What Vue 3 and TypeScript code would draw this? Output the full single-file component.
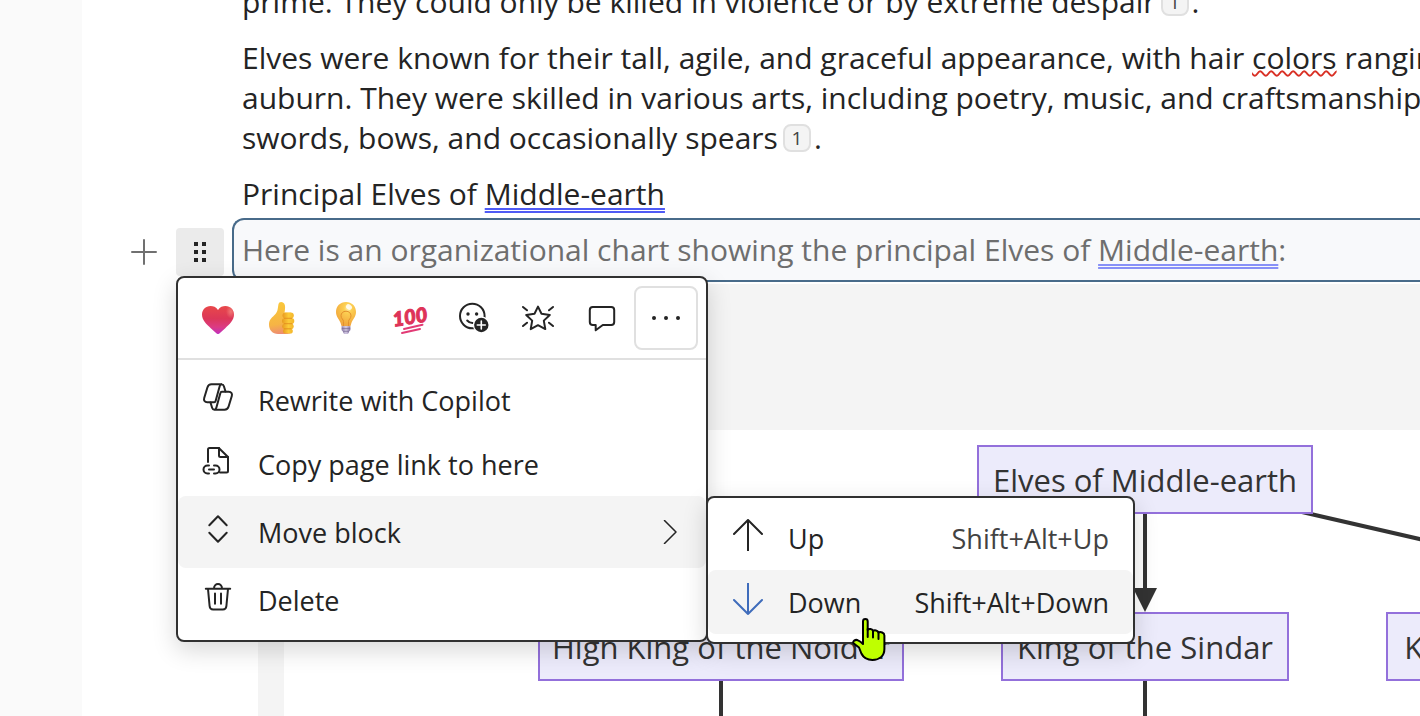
<script setup lang="ts">
import { ref } from 'vue'

interface ChartNode {
  id: string
  label: string
}

const nodes: ChartNode[] = [
  { id: 'root', label: 'Elves of Middle-earth' },
  { id: 'noldor', label: 'High King of the Noldor' },
  { id: 'sindar', label: 'King of the Sindar' },
  { id: 'kings', label: 'King of the Vanyar' },
]

const menuOpen = ref(true)
</script>

<template>
  <div class="app">
    <aside class="rail"></aside>
    <main class="doc">
      <p class="text">prime. They could only be killed in violence or by extreme despair<a class="cite" href="#ref-1">1</a>.</p>
      <p class="text">
        Elves were known for their tall, agile, and graceful appearance, with hair <span class="misspelt">colors</span> ranging from<br />
        auburn. They were skilled in various arts, including poetry, music, and craftsmanship.<br />
        swords, bows, and occasionally spears<a class="cite" href="#ref-1">1</a>.
      </p>
      <p class="text heading">Principal Elves of <span class="grammar">Middle-earth</span></p>

      <div class="block-row">
        <button class="add" type="button" aria-label="Add block">
          <svg width="26" height="26" viewBox="0 0 26 26"><path d="M13 1v24M1 13h24" /></svg>
        </button>
        <div class="handle-wrap">
          <button class="handle" type="button" aria-label="Block options" @click="menuOpen = !menuOpen">
            <svg width="16" height="24" viewBox="0 0 16 24">
              <path d="M2 2h4v4H2zM10 2h4v4h-4zM2 10h4v4H2zM10 10h4v4h-4zM2 18h4v4H2zM10 18h4v4h-4z" />
            </svg>
          </button>

          <div v-if="menuOpen" class="menu" role="menu">
            <div class="toolbar">
              <button class="tool" type="button" aria-label="Heart">
                <svg width="32" height="32" viewBox="0 0 32 32">
                  <defs>
                    <linearGradient id="heart" x1="0" y1="0" x2="0" y2="1">
                      <stop offset="0" stop-color="#e8484a" />
                      <stop offset=".45" stop-color="#dc3758" />
                      <stop offset=".75" stop-color="#dc3b83" />
                      <stop offset="1" stop-color="#c030c0" />
                    </linearGradient>
                    <radialGradient id="heartglow" cx=".8" cy=".25" r=".3">
                      <stop offset="0" stop-color="#f58a82" stop-opacity=".75" />
                      <stop offset="1" stop-color="#f58a82" stop-opacity="0" />
                    </radialGradient>
                  </defs>
                  <path fill="url(#heart)" d="M16 8C14 4.800 11.300 4 8.600 4 3.500 4 0 7.800 0 12.600c0 5.800 4.500 9.800 9 13.800 2 1.700 3.700 3.500 5.600 5.200.8.600 2 .6 2.800 0 1.900-1.700 3.600-3.500 5.600-5.200 4.500-4 9-8 9-13.800C32 7.800 28.500 4 23.400 4 20.700 4 18 4.800 16 8z" />
                  <path fill="url(#heartglow)" d="M16 8C18 4.800 20.700 4 23.400 4 28.500 4 32 7.800 32 12.600c0 5.800-4.500 9.800-9 13.800L16 20z" />
                </svg>
              </button>
              <button class="tool" type="button" aria-label="Thumbs up">
                <svg width="32" height="32" viewBox="0 0 32 32">
                  <defs>
                    <linearGradient id="thumb" x1=".3" y1="0" x2=".4" y2="1">
                      <stop offset="0" stop-color="#fac83a" />
                      <stop offset=".7" stop-color="#f6b445" />
                      <stop offset="1" stop-color="#ee8d72" />
                    </linearGradient>
                    <linearGradient id="finger" x1="0" y1="0" x2="1" y2="0">
                      <stop offset="0" stop-color="#e89a20" />
                      <stop offset=".55" stop-color="#fccb38" />
                      <stop offset="1" stop-color="#f3b52c" />
                    </linearGradient>
                  </defs>
                  <path fill="url(#thumb)" d="M15.300 0c2.500.1 3.800 2 3.800 5 0 2-.3 3.800-.6 5.800H25V31c-1.500.8-3 1-5 1h-8c-5.500 0-9-4-9-9.500 0-4.500 2.500-6.500 5-9 2.300-2.200 3.500-4 3.800-7L12.400 2.600C12.700.8 13.700 0 15.300 0z" />
                  <g fill="url(#finger)">
                    <rect x="16.500" y="10.500" width="11.300" height="6" rx="3" />
                    <rect x="16" y="16" width="12.300" height="6" rx="3" />
                    <rect x="16.200" y="21.400" width="11.500" height="5.800" rx="2.900" />
                    <rect x="17" y="26.400" width="9.800" height="5.200" rx="2.600" />
                  </g>
                  <path d="M18 16.300h8M18 21.700h8.500M18 26.800h7.500" stroke="#e0881c" stroke-width=".8" fill="none" />
                </svg>
              </button>
              <button class="tool" type="button" aria-label="Light bulb">
                <svg width="32" height="32" viewBox="0 0 32 32">
                  <defs>
                    <radialGradient id="bulb" cx=".6" cy=".25" r=".8">
                      <stop offset="0" stop-color="#fff1b0" />
                      <stop offset=".25" stop-color="#fccf52" />
                      <stop offset=".8" stop-color="#f3ac3e" />
                      <stop offset="1" stop-color="#eda249" />
                    </radialGradient>
                    <linearGradient id="bulbcap" x1="0" y1="0" x2="1" y2="0">
                      <stop offset="0" stop-color="#8c7cab" />
                      <stop offset=".5" stop-color="#d2c8e2" />
                      <stop offset="1" stop-color="#8170a0" />
                    </linearGradient>
                  </defs>
                  <path fill="url(#bulb)" d="M16 0C10.200 0 6 4.300 6 10c0 5 3.400 7.600 4.600 11 .4 1.200.6 2.200 1 3.200h8.800c.4-1 .6-2 1-3.200C22.600 17.600 26 15 26 10 26 4.300 21.800 0 16 0z" />
                  <path fill="none" stroke="#e3902c" stroke-width="1" d="M13.500 24v-4.500c0-2-2.500-3-2.500-5.700 0-2.600 2-4.600 5-4.600s5 2 5 4.600c0 2.700-2.500 3.700-2.500 5.700V24" />
                  <path fill="url(#bulbcap)" d="M11.600 24.200h8.800v3.300c0 1-.5 1.300-1.400 1.700v1c0 1-1.300 1.800-3 1.800s-3-.8-3-1.800v-1c-.9-.4-1.400-.7-1.400-1.700z" />
                  <path stroke="#75678f" stroke-width=".7" d="M11.800 26.600h8.400M12.800 29.300h6.400" />
                  <ellipse cx="19" cy="5" rx="3.200" ry="2.500" fill="#fff" opacity=".8" transform="rotate(35 19 5)" />
                </svg>
              </button>
              <button class="tool" type="button" aria-label="Hundred points">
                <svg class="points" width="32" height="32" viewBox="0 0 32 32">
                  <g transform="rotate(-9 16 16)">
                    <text class="hundred" x="16" y="22" text-anchor="middle">100</text>
                  </g>
                  <path d="M10 27 28.500 22.800M8 31l18-4" stroke="#e23a75" stroke-width="2" stroke-linecap="round" fill="none" />
                </svg>
              </button>
              <button class="tool" type="button" aria-label="Add reaction">
                <svg width="32" height="32" viewBox="0 0 32 32">
                  <circle cx="14.300" cy="14" r="12.300" class="line" />
                  <circle cx="10" cy="12" r="1.700" fill="#242424" />
                  <circle cx="18.600" cy="12" r="1.700" fill="#242424" />
                  <path d="M9.200 18.500c1.700 2 3.600 2.700 6 2.500" class="line" />
                  <circle cx="23.300" cy="23" r="8.500" fill="#fff" />
                  <circle cx="23.300" cy="23" r="7.200" fill="#242424" />
                  <path d="M23.300 19v8M19.300 23h8" stroke="#fff" stroke-width="1.600" stroke-linecap="round" />
                </svg>
              </button>
              <button class="tool" type="button" aria-label="Sticker">
                <svg width="32" height="32" viewBox="0 0 32 32">
                  <path class="line" d="M16 4.600l3.500 7.100 8.300 1.200-6 5.700 1.500 8.500L16 23.200l-7.300 3.900 1.500-8.500-6-5.700 8.300-1.200z" />
                  <path class="line" d="M1 5l4 3.300M31 5l-4 3.300M1 24l4-3.300M31 24l-4-3.300" />
                </svg>
              </button>
              <button class="tool" type="button" aria-label="Comment">
                <svg width="32" height="32" viewBox="0 0 32 32">
                  <path class="line" d="M6.800 5h18.400c1.800 0 3 1.200 3 3v12c0 1.800-1.200 3-3 3H16.800L9.700 28.300V23H6.800c-1.800 0-3-1.200-3-3V8c0-1.800 1.200-3 3-3z" />
                </svg>
              </button>
              <button class="tool more" type="button" aria-label="More">
                <svg width="32" height="32" viewBox="0 0 32 32">
                  <path d="M4 16h.01M16 16h.01M28 16h.01" stroke="#242424" stroke-width="4" stroke-linecap="round" />
                </svg>
              </button>
            </div>

            <div class="items">
              <button class="item" type="button" role="menuitem">
                <svg class="icon" width="32" height="32" viewBox="0 0 32 32">
                  <path class="line" d="M23.500 10.500 21.900 5.300c-.4-1.300-1.100-2-2.400-2H9.500C7.500 3.300 6 4.500 5.400 6.500L2.200 17c-.7 2.400.5 4.300 3 4.300h7c.8 0 1.200-.5 1.400-1.300L17.600 5.500c.4-1.400 1-2.200 2-2.200" />
                  <path class="line" transform="rotate(180 16 16)" d="M23.500 10.500 21.900 5.300c-.4-1.300-1.100-2-2.400-2H9.500C7.500 3.300 6 4.500 5.400 6.500L2.200 17c-.7 2.400.5 4.300 3 4.300h7c.8 0 1.200-.5 1.400-1.300L17.600 5.500c.4-1.400 1-2.200 2-2.200" />
                </svg>
                <span>Rewrite with Copilot</span>
              </button>
              <button class="item" type="button" role="menuitem">
                <svg class="icon" width="32" height="32" viewBox="0 0 32 32">
                  <path class="line" d="M6 17V4.500C6 3.500 6.500 3 7.500 3h9.300L26 12v14c0 1-.5 1.500-1.500 1.500H18" />
                  <path class="line" d="M17 3v7.500c0 1 .5 1.500 1.500 1.500H26" />
                  <path class="line" d="M7 20.500H5.500a4 4 0 0 0 0 8H7M12 20.500h1.500a4 4 0 0 1 0 8H12M7 24.500h5" />
                </svg>
                <span>Copy page link to here</span>
              </button>
              <div class="parent">
                <button class="item tall active" type="button" role="menuitem" aria-haspopup="true" aria-expanded="true">
                  <svg class="icon" width="32" height="32" viewBox="0 0 32 32">
                    <path class="line" d="M7.300 12.300 16 3.300l8.700 9M7.300 19.700l8.700 9 8.700-9" />
                  </svg>
                  <span>Move block</span>
                  <svg class="chevron" width="24" height="24" viewBox="0 0 24 24"><path class="line" d="M6.500.5 18 12 6.500 23.500" /></svg>
                </button>
                <div class="menu submenu" role="menu">
                  <button class="item" type="button" role="menuitem">
                    <svg class="icon" width="32" height="32" viewBox="0 0 32 32">
                      <path class="line" d="M16 1v30.500M2 15 16 1l14 14" />
                    </svg>
                    <span>Up</span><kbd>Shift+Alt+Up</kbd>
                  </button>
                  <div class="parent">
                    <button class="item active down" type="button" role="menuitem">
                      <svg class="icon" width="32" height="32" viewBox="0 0 32 32">
                        <path class="line" d="M16 0v31M2 17l14 14 14-14" />
                      </svg>
                      <span>Down</span><kbd>Shift+Alt+Down</kbd>
                    </button>
                    <svg class="cursor" width="34" height="44" viewBox="0 0 34 44">
                      <path fill="#bfff00" stroke="#000" stroke-width="2" stroke-linejoin="round" d="M11 25V3.500C11 .3 15.700.3 15.700 3.500V12c1-1.600 5-1.300 5.400 1 1.200-1.200 4.700-.8 5.300 1.500 2-1 6 0 6 3V31c0 7-5 11-12 11-6 0-9-2.700-11-6.500L7 29.500 1.800 25.500C-.2 23.500 3.500 21 6 22.300c2 .9 3.300 2 5 3.700z" />
                      <path fill="none" stroke="#000" stroke-width="2" stroke-linecap="round" d="M15.700 11v8M21 13v6.500M26.500 14.500V21" />
                    </svg>
                  </div>
                </div>
              </div>
              <button class="item" type="button" role="menuitem">
                <svg class="icon" width="32" height="32" viewBox="0 0 32 32">
                  <path class="line" d="M3.800 7.700h24.400M12 7.500c0-6 8-6 8 0M6 8l1.600 17c.2 2.300 1.400 3.500 3.500 3.500h9.800c2.100 0 3.300-1.200 3.500-3.500L26 8M13 12.500v10.200M19 12.500v10.200" />
                </svg>
                <span>Delete</span>
              </button>
            </div>
          </div>
        </div>
        <p class="block">Here is an organizational chart showing the principal Elves of <span class="grammar">Middle-earth</span>:</p>
      </div>

      <section class="chart">
        <div class="canvas">
          <svg class="edges" width="1400" height="400" viewBox="0 0 1400 400">
            <path d="M861 84v80M437 251v149M861 251v149M1018 82l200 46" />
            <path class="head" d="M849 158h24l-12 24z" />
          </svg>
          <div v-for="n in nodes" :key="n.id" class="node" :class="n.id">{{ n.label }}</div>
        </div>
      </section>
    </main>
  </div>
</template>

<style>
body {
  margin: 0;
  overflow: hidden;
}
</style>

<style scoped>
.app {
  display: flex;
  height: 100vh;
  overflow: hidden;
  background: #fff;
  color: #242424;
  font-family: 'Segoe UI', 'Open Sans', 'Noto Sans', sans-serif;
}
.rail {
  flex: 0 0 82px;
  background: #fafafa;
}
.doc {
  flex: 1;
  min-width: 0;
  display: flex;
  flex-direction: column;
  margin-top: -18px;
}
.text {
  margin: 0 0 16px 160px;
  font-size: 30px;
  line-height: 40px;
  white-space: nowrap;
}
.heading {
  margin-bottom: 4px;
}
.cite {
  display: inline-block;
  box-sizing: border-box;
  width: 28px;
  height: 28px;
  margin: 0 3px 0 5px;
  border: 2px solid #e0e0e0;
  border-radius: 8px;
  background: #f4f4f4;
  color: #424242;
  font-size: 19px;
  line-height: 24px;
  text-align: center;
  text-decoration: none;
  vertical-align: 4px;
}
.misspelt {
  text-decoration: underline wavy #d93025 2px;
  text-decoration-skip-ink: none;
  text-underline-offset: 1px;
}
.grammar {
  text-decoration: underline double #4f5bf5 2px;
  text-decoration-skip-ink: none;
  text-underline-offset: 3px;
}
button {
  display: flex;
  align-items: center;
  justify-content: center;
  margin: 0;
  padding: 0;
  border: 0;
  background: none;
  color: inherit;
  font: inherit;
}
svg {
  flex: none;
  display: block;
}
.line {
  fill: none;
  stroke: #242424;
  stroke-width: 2;
  stroke-linecap: round;
  stroke-linejoin: round;
}
.block-row {
  display: flex;
  align-items: flex-end;
  padding-left: 46px;
}
.add {
  width: 32px;
  height: 48px;
  margin: 0 16px 6px 0;
}
.add path {
  stroke: #707070;
  stroke-width: 2;
  stroke-linecap: round;
}
.handle-wrap {
  position: relative;
  margin: 0 8px 6px 0;
  z-index: 2;
}
.handle {
  width: 48px;
  height: 48px;
  border-radius: 4px;
  background: #ebebeb;
}
.handle path {
  fill: #242424;
}
.block {
  flex: 1;
  box-sizing: border-box;
  min-width: 0;
  height: 64px;
  margin: 0;
  padding: 0 8px;
  overflow: hidden;
  border: 2px solid #486b8a;
  border-right: 0;
  border-radius: 12px 0 0 12px;
  background: #f8f9fb;
  color: #6e6e6e;
  font-size: 30px;
  line-height: 60px;
  white-space: nowrap;
}
.block .grammar {
  text-decoration-color: #8790f7;
}
.menu {
  position: absolute;
  top: 100%;
  left: 0;
  box-sizing: border-box;
  width: 532px;
  border: 2px solid #303030;
  border-radius: 8px;
  background: #fff;
  box-shadow: 0 8px 24px rgba(0, 0, 0, 0.16);
  font-size: 27px;
  line-height: 36px;
}
.toolbar {
  display: flex;
  padding: 8px;
  border-bottom: 2px solid #e0e0e0;
}
.tool {
  flex: 0 0 64px;
  box-sizing: border-box;
  height: 64px;
}
.more {
  border: 2px solid #e0e0e0;
  border-radius: 8px;
}
.points {
  overflow: visible;
}
.hundred {
  fill: #de3358;
  stroke: #de3358;
  stroke-width: 1;
  font: italic 900 20px Lato, 'Open Sans', sans-serif;
}
.items {
  padding: 8px 0;
}
.item {
  box-sizing: border-box;
  width: 100%;
  height: 64px;
  padding: 0 24px;
  gap: 24px;
  justify-content: flex-start;
  border-radius: 8px;
  white-space: nowrap;
}
.item span {
  padding-top: 2px;
}
.tall {
  height: 72px;
}
.active {
  background: #f4f4f4;
}
.icon {
  margin-bottom: 6px;
}
.chevron {
  margin-left: auto;
}
.chevron .line {
  stroke-width: 1.500;
}
.parent {
  position: relative;
}
.submenu {
  top: 0;
  left: 100%;
  width: 429px;
  padding: 8px 0;
}
.submenu kbd {
  margin-left: auto;
  padding-top: 2px;
  color: #424242;
  font: inherit;
}
.submenu .down kbd {
  color: #242424;
}
.down .line {
  stroke: #3f6cbb;
}
.cursor {
  position: absolute;
  top: 48px;
  left: 144px;
}
.chart {
  flex: 1;
  display: flex;
  margin: 2px 0 0 176px;
  padding: 146px 0 0 26px;
  background: #f4f4f4;
}
.canvas {
  position: relative;
  flex: 1;
  overflow: hidden;
  background: #fff;
}
.edges {
  position: absolute;
  top: 0;
  left: 0;
}
.edges path {
  fill: none;
  stroke: #333;
  stroke-width: 4;
}
.edges .head {
  fill: #333;
  stroke: none;
}
.node {
  position: absolute;
  top: 182px;
  box-sizing: border-box;
  height: 69px;
  border: 2px solid #9370db;
  background: #ecebfb;
  color: #333;
  font-family: 'Trebuchet MS', 'Open Sans', sans-serif;
  font-size: 31px;
  line-height: 67px;
  text-align: center;
  white-space: nowrap;
}
.root {
  top: 15px;
  left: 693px;
  width: 336px;
}
.noldor {
  left: 254px;
  width: 366px;
}
.sindar {
  left: 717px;
  width: 288px;
}
.kings {
  left: 1102px;
  width: 300px;
}
</style>
